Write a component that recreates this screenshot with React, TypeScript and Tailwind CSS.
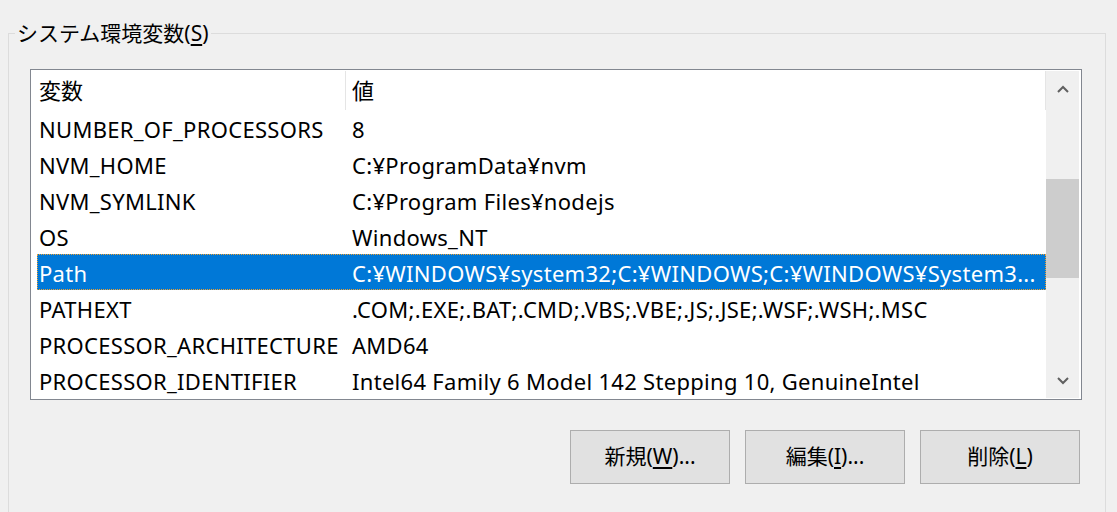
import React from "react";

const rows: [string, string][] = [
  ["NUMBER_OF_PROCESSORS", "8"],
  ["NVM_HOME", "C:¥ProgramData¥nvm"],
  ["NVM_SYMLINK", "C:¥Program Files¥nodejs"],
  ["OS", "Windows_NT"],
  ["Path", "C:¥WINDOWS¥system32;C:¥WINDOWS;C:¥WINDOWS¥System3..."],
  ["PATHEXT", ".COM;.EXE;.BAT;.CMD;.VBS;.VBE;.JS;.JSE;.WSF;.WSH;.MSC"],
  ["PROCESSOR_ARCHITECTURE", "AMD64"],
  ["PROCESSOR_IDENTIFIER", "Intel64 Family 6 Model 142 Stepping 10, GenuineIntel"],
];

const font = {
  fontFamily: '"Noto Sans", "Noto Sans CJK JP", sans-serif',
};

function Btn({ label, key2, tail }: { label: string; key2: string; tail: string }) {
  return (
    <button className="w-[160px] h-[54px] bg-[#e1e1e1] border border-[#adadad] text-[21px] text-black flex items-center justify-center">
      <span>
        {label}(<span className="underline underline-offset-[3px]">{key2}</span>){tail}
      </span>
    </button>
  );
}

export default function App() {
  return (
    <div className="w-[1117px] h-[512px] bg-[#f0f0f0] overflow-hidden" style={font}>
      <fieldset className="ml-[8px] mt-[20px] w-[1098px] h-[520px] border border-[#dcdcdc] p-0 m-0">
        <legend className="ml-[6px] px-[2px] text-[21px] leading-[26px] text-black">
          システム環境変数(<span className="underline underline-offset-[3px]">S</span>)
        </legend>

        <div className="ml-[21px] mt-[23px] w-[1052px] h-[331px] border border-[#828790] bg-white p-px flex">
          <div className="flex-1 flex flex-col">
            <div className="h-[40px] flex items-center text-[22px] text-black">
              <div className="ml-[5px] w-[309px] h-full pl-[2px] flex items-center border-r border-[#e5e5e5]">
                変数
              </div>
              <div className="flex-1 h-full pl-[6px] flex items-center border-r border-[#e5e5e5]">値</div>
            </div>
            {rows.map(([k, v]) => {
              const sel = k === "Path";
              return (
                <div
                  key={k}
                  className={
                    sel
                      ? "ml-[5px] h-[36px] pt-[2px] flex items-center text-[22px] tracking-[0.3px] whitespace-nowrap bg-[#0078d7] text-white border border-dotted border-[#f0a030]"
                      : "ml-[5px] h-[36px] pt-[2px] flex items-center text-[22px] tracking-[0.3px] whitespace-nowrap text-black border border-transparent"
                  }
                >
                  <div className="w-[312px] pl-[1px]">{k}</div>
                  <div className="flex-1 pl-[2px] overflow-hidden">{v}</div>
                </div>
              );
            })}
          </div>
          <div className="w-[33px] bg-[#f0f0f0] mr-px flex flex-col">
            <div className="h-[36px] flex items-center justify-center">
              <svg width="12" height="8" viewBox="0 0 12 8">
                <path d="M1 7 L6 2 L11 7" fill="none" stroke="#606060" strokeWidth="2" />
              </svg>
            </div>
            <div className="flex-1">
              <div className="mt-[72px] h-[99px] bg-[#cdcdcd]" />
            </div>
            <div className="h-[34px] flex items-center justify-center">
              <svg width="12" height="8" viewBox="0 0 12 8">
                <path d="M1 1 L6 6 L11 1" fill="none" stroke="#606060" strokeWidth="2" />
              </svg>
            </div>
          </div>
        </div>

        <div className="mt-[30px] ml-[561px] flex gap-[15px]">
          <Btn label="新規" key2="W" tail="..." />
          <Btn label="編集" key2="I" tail="..." />
          <Btn label="削除" key2="L" tail="" />
        </div>
      </fieldset>
    </div>
  );
}
